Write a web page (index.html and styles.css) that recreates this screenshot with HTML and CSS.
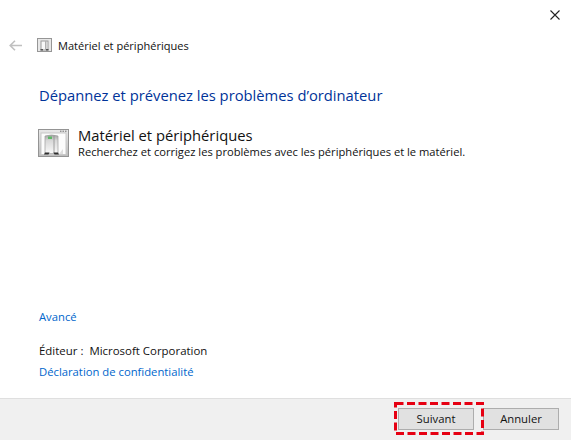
FILE: index.html
```html
<!DOCTYPE html>
<html lang="fr">
<head>
  <meta charset="UTF-8" />
  <title>Matériel et périphériques</title>
  <link rel="stylesheet" href="styles.css">
</head>
<body>
  <div class="wizard">
    <div class="close-row">
      <svg class="close-icon" width="10" height="10" viewBox="0 0 10 10"><path d="M0.5 0.5l9 9M9.5 0.5l-9 9" stroke="#222" stroke-width="1.1" fill="none"/></svg>
    </div>
    <div class="nav-row">
      <svg class="back-icon" width="13" height="11" viewBox="0 0 13 11"><path d="M13 5.5H1.5M6 0.8L1.2 5.5L6 10.2" stroke="#c0c0c0" stroke-width="1.6" fill="none"/></svg>
      <svg class="small-icon" width="15" height="14" viewBox="0 0 15 14">
        <rect x="0.5" y="0.5" width="14" height="13" fill="#e8e8e8" stroke="#969696"/>
        <rect x="4" y="3" width="7" height="9" fill="#f8f8f8" stroke="#9a9a9a"/>
        <rect x="8" y="3" width="1.5" height="9" fill="#b0b0b0"/>
        <rect x="3.5" y="11" width="2.5" height="1.5" fill="#555"/>
        <rect x="9" y="11" width="2.5" height="1.5" fill="#555"/>
      </svg>
      <span class="nav-title">Matériel et périphériques</span>
    </div>
    <div class="content">
      <h1 class="heading">Dépannez et prévenez les problèmes d’ordinateur</h1>
      <div class="task">
        <svg class="task-icon" width="31" height="28" viewBox="0 0 31 28">
          <defs>
            <linearGradient id="frame" x1="0" y1="0" x2="0" y2="1"><stop offset="0" stop-color="#e8e8e8"/><stop offset="1" stop-color="#bcbcbc"/></linearGradient>
            <linearGradient id="tower" x1="0" y1="0" x2="0" y2="1"><stop offset="0" stop-color="#a4a4a4"/><stop offset="0.3" stop-color="#d8d8d8"/><stop offset="1" stop-color="#fafafa"/></linearGradient>
          </defs>
          <rect x="0.5" y="0.5" width="30" height="27" fill="url(#frame)" stroke="#949494"/>
          <rect x="3" y="4" width="25" height="21.5" fill="#fcfcfc" stroke="#c8c8c8"/>
          <path d="M7 7q6.5-2 13 0v17.5H7z" fill="url(#tower)" stroke="#9c9c9c" stroke-width="0.7"/>
          <path d="M16 6.5v18" stroke="#8e8e8e" stroke-width="0.8"/>
          <rect x="10" y="7.5" width="4" height="2.5" fill="#5fb868"/>
          <path d="M7 23.5l-1 2h4.5l1-2zM15.5 23.5l1 2H21l-1-2z" fill="#2e2e2e"/>
          <path d="M21 25l4-5v5z" fill="#dedede"/>
          <path d="M22 2.2h1.5M24.5 2.2H26M27 2.2h1.5" stroke="#6e6e6e" stroke-width="1"/>
        </svg>
        <div class="task-text">
          <div class="task-title">Matériel et périphériques</div>
          <div class="task-desc">Recherchez et corrigez les problèmes avec les périphériques et le matériel.</div>
        </div>
      </div>
      <div class="links">
        <a class="link advanced" href="#">Avancé</a>
        <div class="publisher"><span>Éditeur :</span><span>Microsoft Corporation</span></div>
        <a class="link" href="#">Déclaration de confidentialité</a>
      </div>
    </div>
    <div class="footer">
      <div class="highlight">
        <button class="btn">Suivant</button>
        <svg class="dashes" width="90" height="33" viewBox="0 0 90 33"><rect x="1.5" y="1.5" width="87" height="30" fill="none" stroke="#e60012" stroke-width="3" stroke-dasharray="8 3.5"/></svg>
      </div>
      <button class="btn">Annuler</button>
    </div>
  </div>
</body>
</html>
```

FILE: styles.css
```css
* {
  margin: 0;
  padding: 0;
  box-sizing: border-box;
  font-family: "Open Sans", "Noto Sans", sans-serif;
}

body {
  background-color: #fff;
  color: #000;
}

.wizard {
  width: 571px;
  height: 440px;
  display: flex;
  flex-direction: column;
  overflow: hidden;
}

.close-row {
  height: 35px;
  display: flex;
  justify-content: flex-end;
  padding: 10px 11px 0 0;
}

.nav-row {
  height: 20px;
  display: flex;
  align-items: center;
  padding-left: 9px;
}

.back-icon {
  margin-right: 15px;
}

.small-icon {
  margin-right: 6px;
}

.nav-title {
  font-size: 11.05px;
  color: #111;
}

.content {
  flex: 1;
  display: flex;
  flex-direction: column;
  padding: 0 39px;
}

.heading {
  font-size: 14.75px;
  font-weight: 400;
  color: #003399;
  line-height: 20px;
  margin-top: 30px;
}

.task {
  display: flex;
  gap: 9px;
  margin-top: 21px;
}

.task-icon {
  margin: 3px 0 0 -1px;
}

.task-title {
  font-size: 14.75px;
  line-height: 18px;
  color: #111;
}

.task-desc {
  font-size: 11.17px;
  line-height: 16px;
  color: #111;
}

.links {
  margin-top: auto;
  padding-bottom: 17px;
  display: flex;
  flex-direction: column;
  font-size: 11.28px;
}

.link {
  color: #0066cc;
  text-decoration: none;
  line-height: 18px;
}

.advanced {
  margin-bottom: 16px;
}

.publisher {
  display: flex;
  gap: 6px;
  font-size: 11.45px;
  line-height: 18px;
  margin-bottom: 3px;
  color: #111;
}

.footer {
  height: 42px;
  background-color: #f0f0f0;
  border-top: 1px solid #dfdfdf;
  display: flex;
  align-items: center;
  justify-content: flex-end;
  gap: 9px;
  padding: 0 12px 2px 0;
}

.highlight {
  position: relative;
  display: flex;
}

.dashes {
  position: absolute;
  left: -4px;
  top: -6px;
}

.btn {
  width: 76px;
  height: 22px;
  background-color: #e1e1e1;
  border: 1px solid #adadad;
  font-size: 11.3px;
  color: #111;
}
```
